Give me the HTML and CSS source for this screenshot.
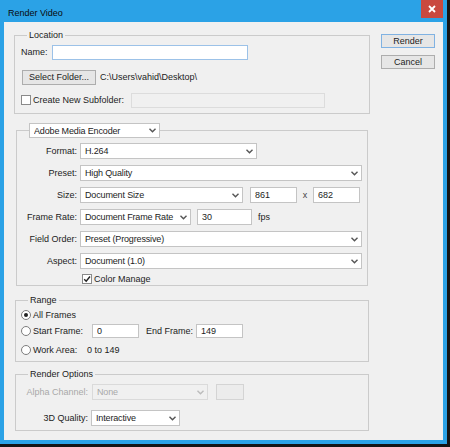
FILE: index.html
```html
<!DOCTYPE html>
<html lang="en">
<head>
    <meta charset="UTF-8">
    <title>Render Video</title>
    <link rel="stylesheet" href="styles.css">
</head>
<body>
    <div class="window">
        <div class="titlebar">
            <span class="title">Render Video</span>
            <span class="close">
                <svg width="8" height="8" viewBox="0 0 8 8"><path d="M1 1L7 7M7 1L1 7" stroke="#fff" stroke-width="1.8"/></svg>
            </span>
        </div>

        <div class="client">
            <div class="groups">
                <fieldset class="group location">
                    <legend>Location</legend>
                    <div class="row">
                        <span class="name-label">Name:</span>
                        <input class="field name-field" type="text">
                    </div>
                    <div class="row gap9">
                        <button class="btn folder-btn">Select Folder...</button>
                        <span class="path">C:\Users\vahid\Desktop\</span>
                    </div>
                    <div class="row gap7">
                        <span class="check"></span>
                        <span>Create New Subfolder:</span>
                        <input class="field subfolder-field" type="text" disabled>
                    </div>
                </fieldset>

                <fieldset class="group encoder">
                    <legend>
                        <div class="select encoder-select"><span>Adobe Media Encoder</span><svg class="chev" width="7" height="5" viewBox="0 0 7 5"><path d="M0.5 0.8L3.5 3.8L6.5 0.8" fill="none" stroke="#555" stroke-width="1.4"/></svg></div>
                    </legend>
                    <div class="row">
                        <span class="label">Format:</span>
                        <div class="select w177"><span>H.264</span><svg class="chev" width="7" height="5" viewBox="0 0 7 5"><path d="M0.5 0.8L3.5 3.8L6.5 0.8" fill="none" stroke="#555" stroke-width="1.4"/></svg></div>
                    </div>
                    <div class="row gap6">
                        <span class="label">Preset:</span>
                        <div class="select w282"><span>High Quality</span><svg class="chev" width="7" height="5" viewBox="0 0 7 5"><path d="M0.5 0.8L3.5 3.8L6.5 0.8" fill="none" stroke="#555" stroke-width="1.4"/></svg></div>
                    </div>
                    <div class="row gap6">
                        <span class="label">Size:</span>
                        <div class="select w163"><span>Document Size</span><svg class="chev" width="7" height="5" viewBox="0 0 7 5"><path d="M0.5 0.8L3.5 3.8L6.5 0.8" fill="none" stroke="#555" stroke-width="1.4"/></svg></div>
                        <input class="field size-field" type="text" value="861">
                        <span class="times">x</span>
                        <input class="field size-field" type="text" value="682">
                    </div>
                    <div class="row gap6">
                        <span class="label">Frame Rate:</span>
                        <div class="select w111"><span>Document Frame Rate</span><svg class="chev" width="7" height="5" viewBox="0 0 7 5"><path d="M0.5 0.8L3.5 3.8L6.5 0.8" fill="none" stroke="#555" stroke-width="1.4"/></svg></div>
                        <input class="field fps-field" type="text" value="30">
                        <span class="fps">fps</span>
                    </div>
                    <div class="row gap6">
                        <span class="label">Field Order:</span>
                        <div class="select w282"><span>Preset (Progressive)</span><svg class="chev" width="7" height="5" viewBox="0 0 7 5"><path d="M0.5 0.8L3.5 3.8L6.5 0.8" fill="none" stroke="#555" stroke-width="1.4"/></svg></div>
                    </div>
                    <div class="row gap6">
                        <span class="label">Aspect:</span>
                        <div class="select w282"><span>Document (1.0)</span><svg class="chev" width="7" height="5" viewBox="0 0 7 5"><path d="M0.5 0.8L3.5 3.8L6.5 0.8" fill="none" stroke="#555" stroke-width="1.4"/></svg></div>
                    </div>
                    <div class="row color-row">
                        <span class="check checked">
                            <svg width="8" height="8" viewBox="0 0 8 8"><path d="M1.2 4.2L3.2 6.2L7 1.5" fill="none" stroke="#222" stroke-width="1.4"/></svg>
                        </span>
                        <span>Color Manage</span>
                    </div>
                </fieldset>

                <fieldset class="group range">
                    <legend>Range</legend>
                    <div class="row short">
                        <span class="radio on"></span>
                        <span>All Frames</span>
                    </div>
                    <div class="row gap1">
                        <span class="radio"></span>
                        <span class="start-label">Start Frame:</span>
                        <input class="field frame-field" type="text" value="0">
                        <span class="end-label">End Frame:</span>
                        <input class="field frame-field" type="text" value="149">
                    </div>
                    <div class="row short gap4">
                        <span class="radio"></span>
                        <span class="work-label">Work Area:</span>
                        <span>0 to 149</span>
                    </div>
                </fieldset>

                <fieldset class="group options">
                    <legend>Render Options</legend>
                    <div class="row">
                        <span class="label wide disabled">Alpha Channel:</span>
                        <div class="select w116 off"><span>None</span><svg class="chev" width="7" height="5" viewBox="0 0 7 5"><path d="M0.5 0.8L3.5 3.8L6.5 0.8" fill="none" stroke="#bbb" stroke-width="1.4"/></svg></div>
                        <span class="swatch"></span>
                    </div>
                    <div class="row gap10">
                        <span class="label wide">3D Quality:</span>
                        <div class="select w89"><span>Interactive</span><svg class="chev" width="7" height="5" viewBox="0 0 7 5"><path d="M0.5 0.8L3.5 3.8L6.5 0.8" fill="none" stroke="#555" stroke-width="1.4"/></svg></div>
                    </div>
                </fieldset>
            </div>

            <div class="actions">
                <button class="btn default">Render</button>
                <button class="btn">Cancel</button>
            </div>
        </div>
    </div>
</body>
</html>
```

FILE: styles.css
```css
* {
    box-sizing: border-box;
}
body {
    margin: 0;
    background-color: #151515;
    font-family: "Liberation Sans", Arial, sans-serif;
    font-size: 9px;
    color: #1c1c1c;
}
.window {
    width: 447px;
    height: 444px;
    background-color: #2ba2e6;
    display: flex;
    flex-direction: column;
}
.titlebar {
    height: 22px;
    display: flex;
    align-items: center;
    padding-left: 8px;
    flex-shrink: 0;
}
.title {
    color: #0a0a0a;
    padding-top: 3px;
}
.close {
    margin-left: auto;
    margin-right: 4px;
    align-self: flex-start;
    width: 22px;
    height: 18px;
    background-color: #c9493f;
    display: flex;
    align-items: center;
    justify-content: center;
}
.client {
    flex: 1;
    margin: 0 4px 4px 4px;
    background-color: #f0f0f0;
    display: flex;
    padding-left: 10px;
}
.groups {
    width: 356px;
}
.actions {
    margin-left: 11px;
    margin-top: 12px;
    display: flex;
    flex-direction: column;
    gap: 7px;
}

/* group boxes */
.group {
    border: 1px solid #cbcbcb;
    min-width: 0;
}
legend {
    line-height: 12px;
    padding: 0 2px;
}
.location {
    margin: 7px 0 0 0;
    padding: 3px 6px 5px 6px;
}
.location legend {
    margin-left: 6px;
}
.encoder {
    margin: 9px 2px 0 2px;
    padding: 5px 5px 0 0;
}
.encoder legend {
    padding: 0;
    margin-left: 12px;
}
.range {
    margin: 8px 1px 0 1px;
    padding: 2px 5px 4px 5px;
}
.range legend {
    margin-left: 7px;
}
.options {
    margin: 6px 1px 0 1px;
    padding: 4px 5px 4px 0;
}
.options legend {
    margin-left: 12px;
}

/* rows */
.row {
    display: flex;
    align-items: center;
    height: 16px;
    white-space: nowrap;
}
.row.short {
    height: 14px;
}
.gap1 { margin-top: 1px; }
.gap4 { margin-top: 4px; }
.gap6 { margin-top: 6px; }
.gap7 { margin-top: 7px; }
.gap9 { margin-top: 9px; }
.gap10 { margin-top: 10px; }

.label {
    width: 60px;
    text-align: right;
    margin-right: 3px;
}
.label.wide {
    width: 72px;
}
.disabled {
    color: #a9a9a9;
}

/* inputs */
.field {
    height: 15px;
    border: 1px solid #c4c4c4;
    background-color: #fff;
    font-family: inherit;
    font-size: 9px;
    color: #1c1c1c;
    padding: 0 4px;
    margin: 0;
    outline: none;
}
.name-label {
    margin-right: 4px;
}
.name-field {
    width: 196px;
    border-color: #9cc2e8;
}
.subfolder-field {
    width: 194px;
    margin-left: 7px;
    background-color: #f0f0f0;
    border-color: #dcdcdc;
}
.size-field {
    width: 47px;
    height: 16px;
}
.size-field:first-of-type {
    margin-left: 7px;
}
.times {
    width: 16px;
    text-align: center;
    color: #444;
}
.fps-field {
    width: 55px;
    height: 16px;
    margin-left: 6px;
}
.fps {
    margin-left: 6px;
}
.frame-field {
    width: 47px;
    height: 14px;
}
.start-label {
    width: 59px;
}
.end-label {
    margin-left: 7px;
    width: 50px;
}
.work-label {
    width: 54px;
}
.path {
    margin-left: 4px;
}

/* drop-down boxes */
.select {
    height: 16px;
    border: 1px solid #c4c4c4;
    background-color: #fff;
    display: flex;
    align-items: center;
    padding-left: 4px;
}
.select span {
    flex: 1;
    overflow: hidden;
    letter-spacing: -0.15px;
}
.chev {
    margin-right: 3px;
    flex-shrink: 0;
}
.select.off {
    background-color: #f0f0f0;
    border-color: #dadada;
    color: #a9a9a9;
    margin-left: 1px;
}
.encoder-select {
    width: 131px;
    height: 15px;
}
.w89 { width: 89px; }
.w111 { width: 111px; }
.w116 { width: 116px; }
.w163 { width: 163px; }
.w177 { width: 177px; }
.w282 { width: 282px; }

.swatch {
    width: 28px;
    height: 16px;
    margin-left: 8px;
    border: 1px solid #d4d4d4;
    background-color: #ececec;
}

/* check boxes and radio buttons */
.check {
    width: 10px;
    height: 10px;
    border: 1px solid #8a8a8a;
    background-color: #fff;
    margin-right: 2px;
    display: flex;
    align-items: center;
    justify-content: center;
}
.color-row {
    height: 12px;
    margin-top: 4px;
    padding-left: 65px;
}
.radio {
    width: 10px;
    height: 10px;
    border: 1px solid #7d7d7d;
    border-radius: 50%;
    background-color: #fff;
    margin-right: 2px;
    display: flex;
    align-items: center;
    justify-content: center;
}
.radio.on::after {
    content: "";
    width: 4px;
    height: 4px;
    border-radius: 50%;
    background-color: #222;
}

/* buttons */
.btn {
    width: 54px;
    height: 14px;
    padding: 0;
    border: 1px solid #adadad;
    background-color: #e6e6e6;
    font-family: inherit;
    font-size: 9px;
    color: #1c1c1c;
    line-height: 12px;
}
.btn.default {
    border-color: #80b2e2;
}
.folder-btn {
    width: 74px;
    height: 15px;
    margin-left: 1px;
}
```
